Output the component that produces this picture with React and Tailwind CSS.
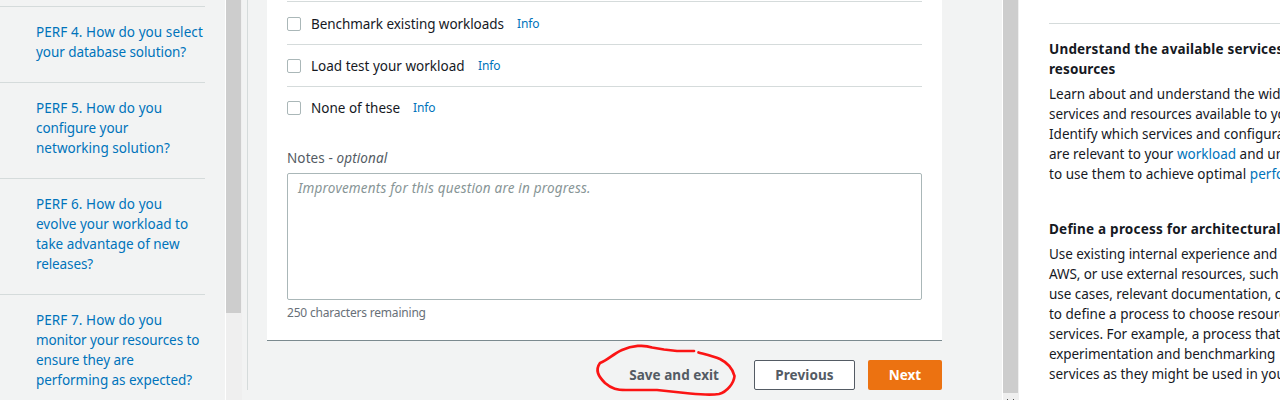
import React from "react";

const questions = [
  [["PERF 4. How do you select", "tracking-[0.08px]"], ["your database solution?", "tracking-[-0.06px]"]],
  [["PERF 5. How do you", "tracking-[0.08px]"], ["configure your", "tracking-[-0.06px]"], ["networking solution?", "tracking-[0.03px]"]],
  [["PERF 6. How do you", "tracking-[0.08px]"], ["evolve your workload to", "tracking-[0.01px]"], ["take advantage of new", "tracking-[-0.02px]"], ["releases?", "tracking-[-0.1px]"]],
  [["PERF 7. How do you", "tracking-[0.08px]"], ["monitor your resources to", "tracking-[-0.09px]"], ["ensure they are", "tracking-[-0.06px]"], ["performing as expected?", "tracking-[-0.05px]"]],
];

const choices = [
  ["Benchmark existing workloads", "w-[206px]", "tracking-[-0.06px]"],
  ["Load test your workload", "w-[167px]", "tracking-[0px]"],
  ["None of these", "w-[102px]", "tracking-[0px]"],
];

function Lines({ lines }) {
  return lines.map(([text, tracking]) => (
    <div key={text} className={`h-5 whitespace-nowrap ${tracking}`}>{text}</div>
  ));
}

function Scrollbar({ thumb, arrow }) {
  return (
    <div className="flex h-full w-[17px] shrink-0 flex-col border-l border-white bg-[#efefef] pr-px">
      <div className={`bg-[#cdcdcd] ${thumb}`} />
      {arrow && (
        <div className="flex justify-center gap-[5px] pt-[6px]">
          <span className="h-px w-px bg-[#505050]" />
          <span className="h-px w-px bg-[#505050]" />
        </div>
      )}
    </div>
  );
}

export default function App() {
  return (
    <div className="flex h-[400px] w-[1280px] overflow-hidden bg-[#f2f3f3] font-['Noto_Sans',sans-serif] text-[13.5px] leading-5 text-[#16191f]">
      <nav className="w-[225px] shrink-0 pt-1.5 text-[#0073bb]">
        {questions.map((lines) => (
          <div key={lines[0][0]} className="mr-5 border-t border-[#d5dbdb] pt-[15px] pb-5 pl-9">
            <Lines lines={lines} />
          </div>
        ))}
      </nav>
      <Scrollbar thumb="h-[313px]" />

      <main className="ml-[5px] flex w-[755px] shrink-0">
        <div className="h-[390px] w-px shrink-0 bg-[#d5dbdb]" />
        <div className="ml-[19px] w-[675px]">
          <section className="h-[341px] border-b border-[#7b8a8f] bg-white px-5 pt-px">
            {choices.map(([label, width, tracking]) => (
              <div key={label} className="flex h-[42px] items-center border-t border-[#d5dbdb] pt-px first:h-[43px] first:pt-0.5">
                <span className="h-3.5 w-3.5 shrink-0 rounded-[2px] border border-[#aab7b8]" />
                <span className={`ml-2.5 whitespace-nowrap ${width} ${tracking}`}>{label}</span>
                <a className="text-xs leading-5 tracking-[-0.1px] text-[#0073bb]">Info</a>
              </div>
            ))}
            <div className="mt-5 tracking-[0.1px] text-[#545b64]">
              Notes - <i>optional</i>
            </div>
            <div className="mt-[5px] h-[127px] rounded-[2px] border border-[#aab7b8] px-2.5 pt-1 tracking-[0.19px] text-[#879596] italic">
              Improvements for this question are in progress.
            </div>
            <div className="mt-[3px] text-xs leading-5 tracking-[-0.2px] text-[#687078]">250 characters remaining</div>
          </section>
          <div className="relative mt-[19px] flex justify-end font-bold text-[#545b64]">
            <button className="mr-[35px] h-[30px] tracking-[0.05px] whitespace-nowrap">Save and exit</button>
            <button className="mr-[13px] h-[30px] w-[101px] rounded-[2px] border border-[#545b64] bg-white tracking-[0.1px]">Previous</button>
            <button className="h-[30px] w-[74px] rounded-[2px] bg-[#ec7211] text-white">Next</button>
            <svg className="pointer-events-none absolute -top-[20px] left-[323px]" width="155" height="60" viewBox="590 340 155 60" fill="none" stroke="#fb1414" strokeWidth="2.7" strokeLinecap="round" strokeLinejoin="round">
              <path d="M694 351H677L664 349.500L652 347.500C644 344.500 632 345.500 622 350C613 354 608 360 600 363C595 370 598 376 605 383C612 389 617 390 626 390H657L690 393.500Q710 395.500 719 394C727 392 734 383 734.500 376C733 370 728 363 720 359C713 356 704 354 698.500 352.500" />
            </svg>
          </div>
        </div>
      </main>

      <Scrollbar thumb="h-[393px]" arrow />
      <aside className="min-w-0 flex-1 bg-white pt-[23px] pl-[30px]">
        <div className="border-t border-[#d5dbdb] pt-[15px]">
          <h3 className="font-bold">
            <Lines lines={[["Understand the available services", "tracking-[0.2px]"], ["resources", "tracking-[0.1px]"]]} />
          </h3>
          <div className="mt-[5px]">
            <Lines lines={[["Learn about and understand the wide", "tracking-[-0.02px]"], ["services and resources available to you.", "tracking-[-0.04px]"], ["Identify which services and configurations", "tracking-[0px]"]]} />
            <div className="whitespace-nowrap">are relevant to your <a className="text-[#0073bb]">workload</a> and understand</div>
            <div className="tracking-[0.05px] whitespace-nowrap">to use them to achieve optimal <a className="text-[#0073bb]">performance</a></div>
          </div>
          <h3 className="mt-[35px] font-bold">
            <Lines lines={[["Define a process for architectural", "tracking-[0.22px]"]]} />
          </h3>
          <div className="mt-[5px]">
            <Lines lines={[["Use existing internal experience and", "tracking-[-0.06px]"], ["AWS, or use external resources, such", "tracking-[-0.08px]"], ["use cases, relevant documentation, or", "tracking-[-0.03px]"], ["to define a process to choose resources", "tracking-[0px]"], ["services. For example, a process that", "tracking-[-0.02px]"], ["experimentation and benchmarking", "tracking-[-0.08px]"], ["services as they might be used in your", "tracking-[-0.01px]"]]} />
          </div>
        </div>
      </aside>
    </div>
  );
}
